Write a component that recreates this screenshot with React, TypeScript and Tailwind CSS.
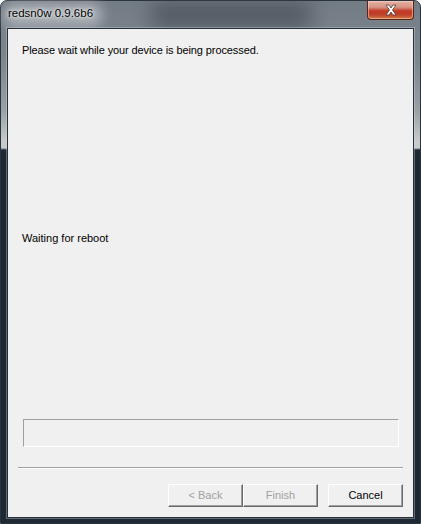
import { useState } from "react";

const tahoma = "font-['Liberation_Sans',Arial,sans-serif] text-[11px] leading-[13px]";

function WizardButton({ label, disabled }: { label: string; disabled?: boolean }) {
  return (
    <button
      disabled={disabled}
      className={`h-[23px] w-[75px] border border-t-white border-l-white border-b-[#696969] border-r-[#696969] bg-[#f0f0f0] shadow-[inset_-1px_-1px_0_#a0a0a0] ${tahoma} ${disabled ? "text-[#a0a0a0]" : "text-black"}`}
    >
      {label}
    </button>
  );
}

function CloseButton() {
  return (
    <div className="absolute right-[6px] top-0 flex h-[19px] w-[47px] items-center justify-center rounded-b-[4px] border border-t-0 border-[#5a2418] bg-[linear-gradient(to_bottom,#e6b4a4_0%,#d69282_35%,#c23a24_55%,#c0402a_75%,#cf7a44_100%)] shadow-[inset_0_0_0_1px_rgba(255,220,200,0.5)]">
      <svg width="14" height="12" viewBox="0 0 14 12">
        <path
          d="M2 1 L5 1 L7 4 L9 1 L12 1 L8.5 6 L12 11 L9 11 L7 8 L5 11 L2 11 L5.5 6 Z"
          fill="#ffffff"
          stroke="#4a3a38"
          strokeWidth="0.8"
          strokeLinejoin="round"
        />
      </svg>
    </div>
  );
}

export default function App() {
  const [progress] = useState(0);

  return (
    <div className="relative h-[524px] w-[421px] overflow-hidden bg-white">
      <div className="relative flex h-full w-full flex-col rounded-t-[7px] border border-[#2a343e] bg-[linear-gradient(to_bottom,#737b84_0px,#7e868e_60px,#9aa0a4_110px,#c6caca_140px,#c6caca_147px,#1e2935_149px,#1e2935_100%)] px-[6px] pb-[5px]">
        {/* title bar haze */}
        <div className="pointer-events-none absolute left-[2px] top-[1px] h-[26px] w-[100px] rounded-[12px] bg-[#b9bec2] opacity-70 blur-[6px]" />
        <div className="pointer-events-none absolute left-[150px] top-[0px] h-[28px] w-[160px] bg-[#3c434b] opacity-60 blur-[10px]" />
        <div className="relative flex h-[26px] items-center pl-[1px]">
          <span className="font-['Liberation_Sans',Arial,sans-serif] text-[11.5px] leading-none text-black [text-shadow:0_0_6px_#fff,0_0_3px_#fff]">
            redsn0w 0.9.6b6
          </span>
        </div>
        <CloseButton />

        <div className="relative mt-[1px] flex flex-1 flex-col border border-[#26303a] bg-[#f0f0f0] shadow-[0_0_0_1px_rgba(220,224,228,0.35)]">
          <p className={`${tahoma} ml-[14px] mt-[15px] tracking-[-0.1px] text-black`}>
            Please wait while your device is being processed.
          </p>
          <p className={`${tahoma} ml-[14px] mt-[175px] text-black`}>Waiting for reboot</p>

          <div className="mx-auto mt-[174px] h-[28px] w-[376px] border border-t-[#a0a0a0] border-l-[#a0a0a0] border-b-white border-r-white">
            <div className="h-full bg-[#06b025]" style={{ width: `${progress}%` }} />
          </div>

          <div className="mx-[10px] mt-[20px] h-[2px] border-t border-t-[#a0a0a0] border-b border-b-white" />

          <div className="mr-[10px] mt-[15px] flex justify-end">
            <WizardButton label="< Back" disabled />
            <WizardButton label="Finish" disabled />
            <div className="w-[10px]" />
            <WizardButton label="Cancel" />
          </div>
        </div>
      </div>
    </div>
  );
}
